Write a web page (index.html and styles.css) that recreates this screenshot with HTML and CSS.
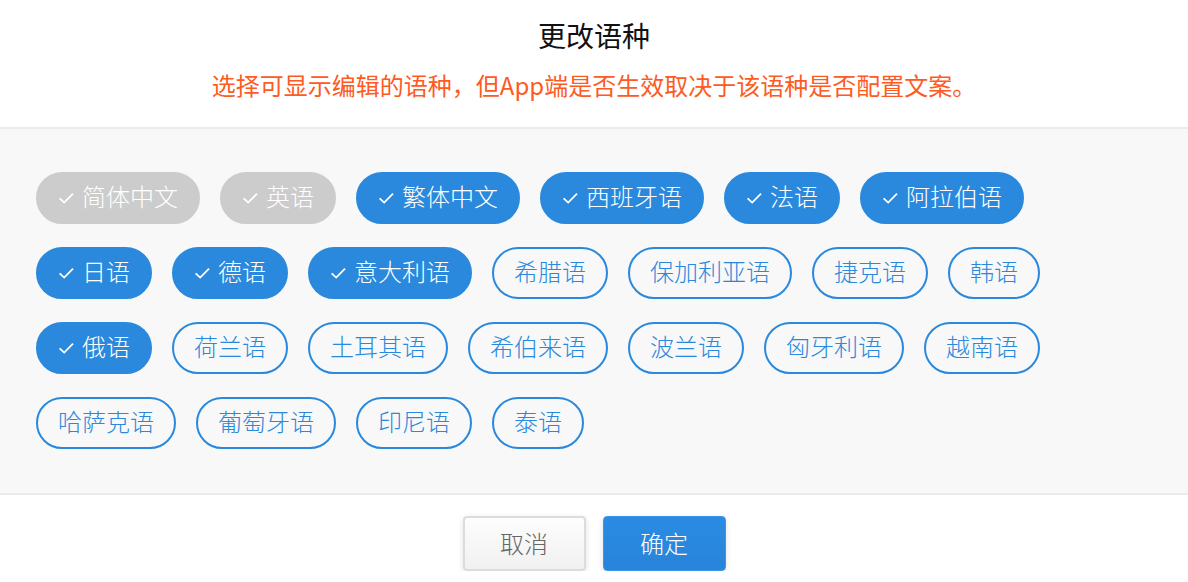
FILE: index.html
```html
<!DOCTYPE html>
<html lang="zh-CN">
<head>
    <meta charset="UTF-8">
    <meta name="viewport" content="width=device-width, initial-scale=1.0">
    <title>更改语种</title>
    <link rel="stylesheet" href="styles.css">
</head>
<body>

    <div class="dialog">
        <div class="header">
            <h1 class="title">更改语种</h1>
            <p class="tip">选择可显示编辑的语种，但App端是否生效取决于该语种是否配置文案。</p>
        </div>

        <div class="panel">
            <span class="tag disabled"><svg class="check" viewBox="0 0 16 16"><path d="M1.6 8.4l4.6 4.2L15 3.6"/></svg>简体中文</span>
            <span class="tag disabled"><svg class="check" viewBox="0 0 16 16"><path d="M1.6 8.4l4.6 4.2L15 3.6"/></svg>英语</span>
            <span class="tag on"><svg class="check" viewBox="0 0 16 16"><path d="M1.6 8.4l4.6 4.2L15 3.6"/></svg>繁体中文</span>
            <span class="tag on"><svg class="check" viewBox="0 0 16 16"><path d="M1.6 8.4l4.6 4.2L15 3.6"/></svg>西班牙语</span>
            <span class="tag on"><svg class="check" viewBox="0 0 16 16"><path d="M1.6 8.4l4.6 4.2L15 3.6"/></svg>法语</span>
            <span class="tag on"><svg class="check" viewBox="0 0 16 16"><path d="M1.6 8.4l4.6 4.2L15 3.6"/></svg>阿拉伯语</span>
            <span class="tag on"><svg class="check" viewBox="0 0 16 16"><path d="M1.6 8.4l4.6 4.2L15 3.6"/></svg>日语</span>
            <span class="tag on"><svg class="check" viewBox="0 0 16 16"><path d="M1.6 8.4l4.6 4.2L15 3.6"/></svg>德语</span>
            <span class="tag on"><svg class="check" viewBox="0 0 16 16"><path d="M1.6 8.4l4.6 4.2L15 3.6"/></svg>意大利语</span>
            <span class="tag">希腊语</span>
            <span class="tag">保加利亚语</span>
            <span class="tag">捷克语</span>
            <span class="tag">韩语</span>
            <span class="tag on"><svg class="check" viewBox="0 0 16 16"><path d="M1.6 8.4l4.6 4.2L15 3.6"/></svg>俄语</span>
            <span class="tag">荷兰语</span>
            <span class="tag">土耳其语</span>
            <span class="tag">希伯来语</span>
            <span class="tag">波兰语</span>
            <span class="tag">匈牙利语</span>
            <span class="tag">越南语</span>
            <span class="tag">哈萨克语</span>
            <span class="tag">葡萄牙语</span>
            <span class="tag">印尼语</span>
            <span class="tag">泰语</span>
        </div>

        <div class="footer">
            <button class="btn cancel">取消</button>
            <button class="btn ok">确定</button>
        </div>
    </div>

</body>
</html>
```

FILE: styles.css
```css
* {
    box-sizing: border-box;
}
body {
    margin: 0;
    font-family: "Noto Sans CJK SC", "Noto Sans", sans-serif;
    background: #fff;
}
.header {
    height: 129px;
    padding-top: 15px;
    text-align: center;
    border-bottom: 2px solid #ebebeb;
}
.title {
    margin: 0;
    font-size: 28px;
    line-height: 40px;
    font-weight: 400;
    color: #111;
}
.tip {
    margin: 13px 0 0;
    font-size: 24px;
    line-height: 34px;
    font-weight: 400;
    color: #fe5a22;
}
.panel {
    display: flex;
    flex-wrap: wrap;
    gap: 23px 20px;
    padding: 43px 36px 44px;
    background: #f8f8f8;
}
.tag {
    display: flex;
    align-items: center;
    height: 52px;
    padding: 0 20px 4px;
    border: 2px solid #2a89dd;
    border-radius: 26px;
    font-size: 24px;
    line-height: 44px;
    font-weight: 300;
    color: #2a89dd;
}
.tag.on {
    background: #2a89dd;
    color: #fff;
}
.tag.disabled {
    background: #cccccc;
    border-color: #cccccc;
    color: #fff;
}
.check {
    width: 16px;
    height: 16px;
    margin: 4px 8px 0 0;
    fill: none;
    stroke: #fff;
    stroke-width: 1.8;
}
.footer {
    display: flex;
    justify-content: center;
    gap: 17px;
    padding-top: 21px;
    border-top: 2px solid #ebebeb;
}
.btn {
    width: 123px;
    height: 55px;
    padding-bottom: 3px;
    font-family: inherit;
    font-size: 24px;
    font-weight: 300;
    border-radius: 4px;
    cursor: pointer;
}
.cancel {
    background: linear-gradient(#fdfdfd, #f1f1f1);
    border: 2px solid #dcdcdc;
    color: #666;
    box-shadow: 0 2px 6px rgba(0, 0, 0, 0.12);
}
.ok {
    background: linear-gradient(#2b8be3, #2784d8);
    border: 1px solid #3b97ec;
    color: #fff;
    box-shadow: 0 2px 6px rgba(0, 0, 0, 0.12);
}
```
